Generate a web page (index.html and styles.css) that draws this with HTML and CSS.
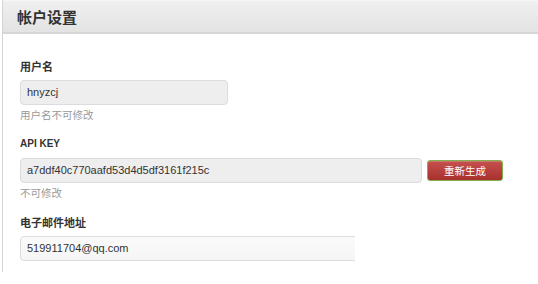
FILE: index.html
```html
<!DOCTYPE html>
<html lang="zh">
<head>
<meta charset="utf-8">
<link rel="stylesheet" href="styles.css">
</head>
<body>
<div class="panel">
  <div class="panel-head">帐户设置</div>
  <div class="panel-body">
    <div class="group">
      <div class="label">用户名</div>
      <div class="input readonly short">hnyzcj</div>
      <div class="help">用户名不可修改</div>
    </div>
    <div class="group">
      <div class="label latin">API KEY</div>
      <div class="row">
        <div class="input readonly long">a7ddf40c770aafd53d4d5df3161f215c</div>
        <button class="btn">重新生成</button>
      </div>
      <div class="help">不可修改</div>
    </div>
    <div class="group">
      <div class="label">电子邮件地址</div>
      <div class="field-wrap">
        <div class="input long email">519911704@qq.com</div>
        <div class="mark"></div>
      </div>
    </div>
  </div>
</div>
</body>
</html>
```
FILE: styles.css
```css
html, body { margin: 0; padding: 0; background: #fff; }
body {
  font-family: "Liberation Sans", Arial, "Noto Sans CJK SC", sans-serif;
  font-size: 11px;
  color: #333;
}
.panel {
  margin-left: 2px;
  border-left: 1px solid #d4d4d4;
  height: 272px;
}
.panel-head {
  height: 34px;
  box-sizing: border-box;
  background: linear-gradient(#f0f0f0, #e3e3e3);
  border-top: 1px solid #f6f6f6;
  border-bottom: 2px solid #d6d6d6;
  padding-left: 14px;
  line-height: 31px;
  font-family: "Noto Sans CJK SC", sans-serif;
  font-weight: bold;
  font-size: 15px;
  color: #333;
}
.panel-body { padding: 25px 0 0 17px; }
.group { margin-bottom: 15px; }
.label {
  font-family: "Noto Sans CJK SC", sans-serif;
  font-weight: bold;
  font-size: 11px;
  line-height: 14px;
  color: #333;
  margin-bottom: 7px;
}
.label.latin {
  font-family: "Liberation Sans", Arial, sans-serif;
  font-size: 10px;
}
.input {
  box-sizing: border-box;
  height: 25px;
  border: 1px solid #dcdcdc;
  border-radius: 4px;
  padding-left: 6px;
  line-height: 23px;
  font-size: 11px;
  color: #333;
  background: #fff;
}
.input.readonly { background: #eeeeee; }
.input.email { background: linear-gradient(#fafafa, #f6f6f6); }
.short { width: 208px; }
.long { width: 402px; }
.row { display: flex; align-items: center; gap: 5px; }
.btn {
  box-sizing: border-box;
  width: 76px;
  height: 21px;
  padding: 0;
  border: 1px solid #7fb24a;
  border-radius: 3px;
  background: linear-gradient(#c5524f, #a8302d);
  color: #fff;
  font-family: "Noto Sans CJK SC", sans-serif;
  font-size: 10.5px;
  line-height: 18px;
  box-shadow: inset 0 1px 0 rgba(255,255,255,0.2);
}
.help {
  margin-top: 3px;
  font-family: "Noto Sans CJK SC", sans-serif;
  font-size: 10.5px;
  line-height: 14px;
  color: #999;
}
.field-wrap { position: relative; width: 402px; }
.mark {
  position: absolute;
  left: 335px;
  top: -3px;
  width: 70px;
  height: 31px;
  background: #fff;
}
```
